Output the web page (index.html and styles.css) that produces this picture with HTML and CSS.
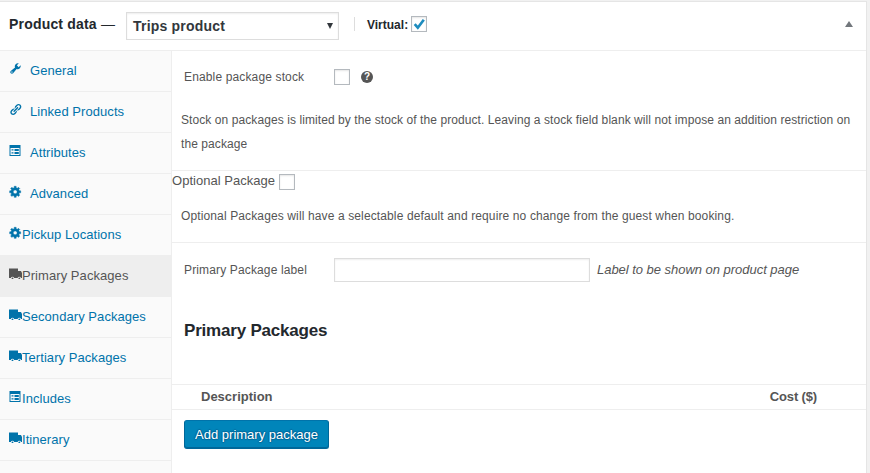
FILE: index.html
```
<!DOCTYPE html>
<html lang="en">
<head>
<meta charset="utf-8">
<title>Product data</title>
<link rel="stylesheet" href="styles.css">
</head>
<body>
<svg class="defs" width="0" height="0">
  <symbol id="wrench" viewBox="0 0 20 20"><path d="M16.68 9.77c-1.34 1.34-3.3 1.67-4.95.99l-5.41 6.52c-.99.99-2.59.99-3.58 0s-.99-2.59 0-3.57l6.52-5.42c-.68-1.65-.35-3.61.99-4.95 1.28-1.28 3.12-1.62 4.72-1.06l-2.89 2.89 2.82 2.82 2.86-2.87c.53 1.58.18 3.39-1.08 4.65zM3.81 16.21c.4.39 1.04.39 1.43 0 .4-.4.4-1.04 0-1.43-.39-.4-1.03-.4-1.43 0-.39.39-.39 1.03 0 1.43z"/></symbol>
  <symbol id="link" viewBox="0 0 20 20"><path d="M17.74 2.76c1.68 1.69 1.68 4.41 0 6.1l-1.53 1.52c-1.12 1.12-2.7 1.47-4.14 1.09l2.62-2.61.76-.77.76-.76c.84-.84.84-2.2 0-3.04-.84-.85-2.2-.85-3.04 0l-.77.76-3.38 3.38c-.37-1.44-.02-3.02 1.1-4.14l1.52-1.53c1.69-1.68 4.42-1.68 6.1 0zM8.59 13.43l5.34-5.34c.42-.42.42-1.1 0-1.52-.44-.43-1.13-.39-1.53 0l-5.33 5.34c-.42.42-.42 1.1 0 1.52.44.43 1.13.39 1.52 0zm-.76 2.29l4.14-4.15c.38 1.44.03 3.02-1.09 4.14l-1.52 1.53c-1.69 1.68-4.41 1.68-6.1 0-1.68-1.68-1.68-4.42 0-6.1l1.53-1.52c1.12-1.12 2.7-1.47 4.14-1.1l-4.14 4.15c-.85.84-.85 2.2 0 3.05.84.84 2.2.84 3.04 0z"/></symbol>
  <symbol id="sheet" viewBox="0 0 12 11"><path fill-rule="evenodd" d="M.5 0h11v11H.5zM1.500 3v7h9V3zM2.500 4.200h2v1.200h-2zM5.500 4h4.300v2H5.500zM2.500 7.200h2v1.200h-2zM5.500 7h4.300v2H5.500z"/></symbol>
  <symbol id="gear" viewBox="0 0 20 20"><path d="M18 12h-2.180c-.17.7-.44 1.350-.81 1.930l1.540 1.540-2.100 2.100-1.540-1.540c-.58.36-1.230.63-1.910.79V19H8v-2.180c-.68-.16-1.330-.43-1.910-.79l-1.540 1.540-2.120-2.120 1.540-1.540c-.36-.58-.63-1.230-.79-1.910H1V9.030h2.170c.16-.7.44-1.350.8-1.940L2.430 5.550l2.100-2.100 1.540 1.540c.58-.37 1.240-.64 1.930-.81V2h3v2.180c.68.16 1.330.43 1.910.79l1.540-1.540 2.120 2.120-1.540 1.540c.36.59.64 1.240.8 1.940H18V12zm-8.500 1.500c1.660 0 3-1.340 3-3s-1.340-3-3-3-3 1.340-3 3 1.340 3 3 3z" stroke="currentColor" stroke-width=".7"/></symbol>
  <symbol id="truck" viewBox="0 0 13 11"><path d="M0 .5h9V3h3l1 2v5h-1a1.800 1.800 0 0 0-3.400 0H5.200a1.800 1.800 0 0 0-3.400 0H0z"/><circle cx="3.500" cy="10.400" r=".9"/><circle cx="10.300" cy="10.400" r=".9"/></symbol>
</svg>
<main class="panel">
  <header class="head">
    <h2 class="title">Product data <span class="dash">—</span></h2>
    <div class="select"><span>Trips product</span><svg width="6" height="6"><path d="M0 0h6L3 6z"/></svg></div>
    <div class="virtual"><span>Virtual:</span><span class="check"><svg width="14" height="14" viewBox="0 0 14 14"><path d="M2.700 7.200 5.800 10.700 11.800 2.800" fill="none" stroke="#1e8cbe" stroke-width="2.700"/></svg></span></div>
    <svg class="toggle" width="8" height="6"><path d="M4 0l4 6H0z"/></svg>
  </header>
  <div class="body">
    <nav class="tabs">
      <a class="tab wide"><svg><use href="#wrench"/></svg>General</a>
      <a class="tab wide"><svg><use href="#link"/></svg>Linked Products</a>
      <a class="tab wide"><svg class="sheet"><use href="#sheet"/></svg>Attributes</a>
      <a class="tab wide"><svg><use href="#gear"/></svg>Advanced</a>
      <a class="tab"><svg><use href="#gear"/></svg>Pickup Locations</a>
      <a class="tab active"><svg class="truck"><use href="#truck"/></svg>Primary Packages</a>
      <a class="tab"><svg class="truck"><use href="#truck"/></svg>Secondary Packages</a>
      <a class="tab"><svg class="truck"><use href="#truck"/></svg>Tertiary Packages</a>
      <a class="tab"><svg class="sheet"><use href="#sheet"/></svg>Includes</a>
      <a class="tab"><svg class="truck"><use href="#truck"/></svg>Itinerary</a>
    </nav>
    <div class="content">
      <section class="stock">
        <div class="field"><label>Enable package stock</label><span class="check"></span><span class="help">?</span></div>
        <p>Stock on packages is limited by the stock of the product. Leaving a stock field blank will not impose an addition restriction on the package</p>
      </section>
      <section class="optional">
        <div class="opt"><label>Optional Package</label><span class="check"></span></div>
        <p class="note">Optional Packages will have a selectable default and require no change from the guest when booking.</p>
      </section>
      <section class="primary">
        <div class="field"><label>Primary Package label</label><input type="text"><em>Label to be shown on product page</em></div>
        <h3>Primary Packages</h3>
        <div class="cols"><b>Description</b><b class="cost">Cost ($)</b></div>
        <button>Add primary package</button>
      </section>
    </div>
  </div>
</main>
</body>
</html>
```
FILE: styles.css
```
* { box-sizing: border-box; }
body { margin: 0; padding-top: 1px; height: 473px; overflow: hidden; background: #f1f1f1; color: #555; font: 13px/20px "Liberation Sans", Arial, sans-serif; }
.defs { display: none; }
svg { display: block; flex: none; fill: currentColor; }
h2, h3, p { margin: 0; }
.panel { width: 867px; height: 472px; background: #fff; border: solid #e5e5e5; border-width: 1px 1px 0 0; }
.head { display: flex; align-items: flex-start; height: 49px; border-bottom: 1px solid #eee; padding: 10px 13px 0 9px; color: #23282d; }
.title { width: 117px; font-size: 14px; line-height: 24px; letter-spacing: .19px; white-space: nowrap; }
.dash { font-weight: 400; }
.select { display: flex; align-items: center; justify-content: space-between; width: 213px; height: 28px; padding: 0 5px 0 6px; border: 1px solid #ddd; box-shadow: inset 0 1px 2px rgba(0,0,0,.07); font-size: 14px; font-weight: 700; letter-spacing: .2px; color: #32373c; }
.virtual { display: flex; align-items: center; gap: 3px; height: 14px; margin: 5px 0 0 15px; padding-left: 12px; border-left: 1px solid #ddd; font-size: 12px; font-weight: 700; }
.virtual > span:first-child { padding-top: 1px; }
.check { display: block; flex: none; width: 16px; height: 16px; border: 1px solid #b4b9be; background: #fff; box-shadow: inset 0 1px 2px rgba(0,0,0,.1); }
.toggle { margin: 9px 0 0 auto; color: #72777c; }
.body { display: flex; height: 422px; }
.tabs { width: 172px; background: #fafafa; border-right: 1px solid #eee; }
.tab { display: flex; height: 41px; padding: 10px 0 0 9px; border-bottom: 1px solid #eee; color: #0073aa; letter-spacing: .06px; white-space: nowrap; }
.tab svg { width: 13px; height: 13px; margin-top: 1px; }
.tab .sheet { width: 12px; height: 11px; margin: 2px 1px 0 0; }
.tab .truck { height: 11px; margin-top: 2px; }
.wide svg { margin-right: 8px; }
.tab.wide .sheet { margin-right: 9px; }
.tab.active { background: #eee; border-color: #eee; color: #555; }
.content { flex: 1; min-width: 0; }
.content section { border-bottom: 1px solid #eee; }
.content .primary { border: 0; }
.content p { padding: 0 9px; font-size: 12px; line-height: 24px; letter-spacing: .08px; }
.content .note { letter-spacing: .125px; }
.field { display: flex; align-items: center; height: 24px; padding-left: 12px; }
.field label { width: 150px; font-size: 12px; letter-spacing: .14px; }
.stock { height: 120px; padding-top: 14px; }
.stock p { margin-top: 19px; }
.help { width: 12px; height: 12px; margin-left: 11px; border-radius: 50%; background: #555; color: #fff; font-size: 10px; font-weight: 700; line-height: 12px; text-align: center; }
.optional { height: 72px; }
.opt { display: flex; align-items: center; gap: 4px; height: 21px; }
.opt label { margin-top: -1px; letter-spacing: .02px; }
.optional p { margin-top: 12px; }
.primary { padding-top: 15px; }
input { width: 256px; height: 24px; margin: 0 7px 0 0; border: 1px solid #ddd; box-shadow: inset 0 1px 2px rgba(0,0,0,.07); background: #fff; }
em { letter-spacing: -.03px; }
h3 { margin: 39px 0 43px 12px; font-size: 17px; line-height: 20px; letter-spacing: -.2px; color: #23282d; }
.cols { display: flex; justify-content: space-between; height: 26px; padding: 2px 49px 0 29px; border: solid #eee; border-width: 1px 0; }
.cost { letter-spacing: -.15px; }
button { display: block; height: 29px; width: 145px; margin: 10px 0 0 12px; padding: 0; border: 1px solid #006799; border-color: #0073aa #006799 #006799; border-radius: 3px; background: #0085ba; box-shadow: inset 0 -1px 0 #006799; color: #fff; font: 13px/26px "Liberation Sans", Arial, sans-serif; text-shadow: 0 -1px 1px #006799, 1px 0 1px #006799, 0 1px 1px #006799, -1px 0 1px #006799; }
```
